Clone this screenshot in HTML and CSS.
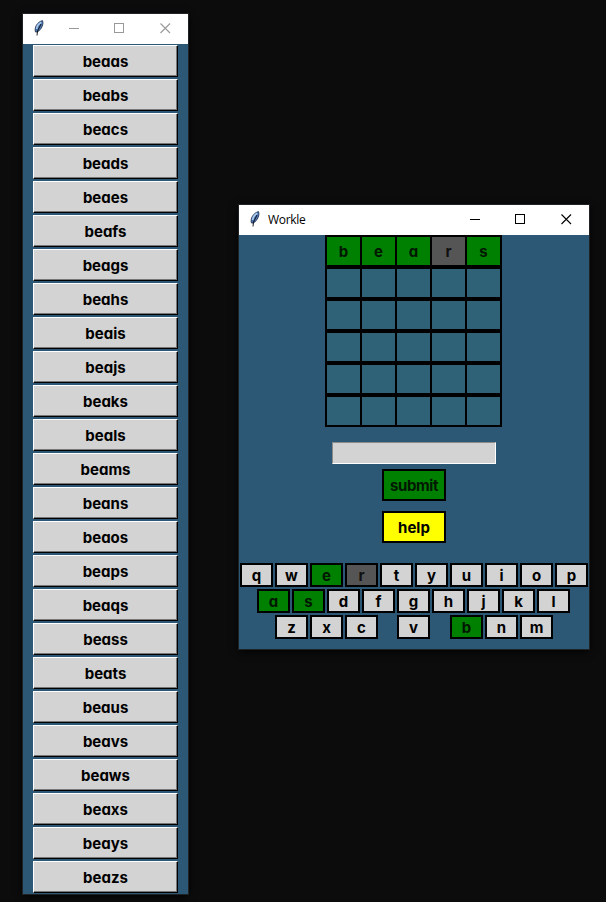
FILE: index.html
```html
<!DOCTYPE html>
<html lang="en">
<head>
<meta charset="utf-8">
<title>Workle</title>
<link rel="stylesheet" href="styles.css">
</head>
<body>
<svg class="defs" aria-hidden="true">
  <symbol id="feather" viewBox="0 0 12 16">
    <path d="M2.500 12C1 8 4 2 9.500 0.600C11 4 8.500 9.500 4.500 12Z" fill="#4a74b0" stroke="#1c2c48" stroke-width="0.800"/>
    <path d="M3.600 9C4 6 6 3.500 8.300 2.200" fill="none" stroke="#a9c9ee" stroke-width="1.600"/>
    <path d="M8 4L4.500 11L4 15.500" fill="none" stroke="#0a0a10" stroke-width="0.900"/>
  </symbol>
  <symbol id="controls" viewBox="0 0 102 12">
    <path d="M0 5.500H10M45.500 0.500H54.500V9.500H45.500Z" fill="none" stroke="currentColor" shape-rendering="crispEdges"/>
    <path d="M91.500 0.500L101 10M101 0.500L91.500 10" fill="none" stroke="currentColor" stroke-width="1.100"/>
  </symbol>
</svg>
<main class="desktop">
  <section class="window words">
    <header class="titlebar inactive">
      <svg class="feather"><use href="#feather"/></svg>
      <svg class="controls"><use href="#controls"/></svg>
    </header>
    <div class="word-list">
      <button>beaas</button><button>beabs</button><button>beacs</button><button>beads</button><button>beaes</button>
      <button>beafs</button><button>beags</button><button>beahs</button><button>beais</button><button>beajs</button>
      <button>beaks</button><button>beals</button><button>beams</button><button>beans</button><button>beaos</button>
      <button>beaps</button><button>beaqs</button><button>beass</button><button>beats</button><button>beaus</button>
      <button>beavs</button><button>beaws</button><button>beaxs</button><button>beays</button><button>beazs</button>
    </div>
  </section>
  <section class="window game">
    <header class="titlebar">
      <svg class="feather"><use href="#feather"/></svg>
      <span class="title">Workle</span>
      <svg class="controls"><use href="#controls"/></svg>
    </header>
    <div class="board">
      <div class="row"><i class="hit">b</i><i class="hit">e</i><i class="hit">a</i><i class="miss">r</i><i class="hit">s</i></div>
      <div class="row"><i></i><i></i><i></i><i></i><i></i></div>
      <div class="row"><i></i><i></i><i></i><i></i><i></i></div>
      <div class="row"><i></i><i></i><i></i><i></i><i></i></div>
      <div class="row"><i></i><i></i><i></i><i></i><i></i></div>
      <div class="row"><i></i><i></i><i></i><i></i><i></i></div>
    </div>
    <input class="guess" type="text" aria-label="guess">
    <button class="action submit">submit</button>
    <button class="action help">help</button>
    <div class="keyboard">
      <div class="keys top"><b>q</b><b>w</b><b class="hit">e</b><b class="miss">r</b><b>t</b><b>y</b><b>u</b><b>i</b><b>o</b><b>p</b></div>
      <div class="keys middle"><b class="hit">a</b><b class="hit">s</b><b>d</b><b>f</b><b>g</b><b>h</b><b>j</b><b>k</b><b>l</b></div>
      <div class="keys bottom"><b>z</b><b>x</b><b>c</b><b class="lone">v</b><b class="hit">b</b><b>n</b><b>m</b></div>
    </div>
  </section>
</main>
</body>
</html>
```
FILE: styles.css
```css
* { box-sizing: border-box; }
body {
  margin: 0;
  background: #0c0c0c;
  color: #000;
  font: 700 15px/20px "Century Gothic", "URW Gothic", Inter, sans-serif;
  font-feature-settings: "cv11";
}
.defs { position: absolute; width: 0; height: 0; }
.desktop {
  display: flex;
  align-items: flex-start;
  gap: 51px;
  height: 902px;
  padding: 14px 0 0 23px;
  overflow: hidden;
}
.window { background: #2d5875; box-shadow: 0 0 0 1px #202326, 0 2px 8px #000; }
.words { width: 165px; height: 880px; }
.game {
  display: flex;
  flex-direction: column;
  align-items: center;
  width: 350px;
  height: 444px;
  margin-top: 191px;
}
.titlebar {
  display: flex;
  align-items: flex-start;
  width: 100%;
  height: 30px;
  padding-left: 10px;
  background: #fff;
}
.feather { width: 12px; height: 16px; margin-top: 6px; }
.controls { width: 102px; height: 12px; margin: 9px 17px 0 auto; }
.inactive .controls { color: #999; }
.title { margin: 5px 0 0 7px; font: 12px/20px "Open Sans", sans-serif; letter-spacing: -0.3px; }
button, input { font: inherit; color: inherit; font-feature-settings: inherit; }
.word-list {
  display: flex;
  flex-direction: column;
  gap: 2px;
  padding: 1px 10px 0;
}
.word-list button {
  height: 32px;
  padding: 2px 0 0;
  background: #d3d3d3;
  border: 1px solid;
  border-color: #fff #000 #000 #fff;
  box-shadow: inset -1px -1px #777;
}
.board { width: 177px; margin-right: 1px; }
.row { display: flex; height: 32px; padding: 2px; gap: 2px; background: #000; }
.row i {
  width: 33px;
  height: 28px;
  padding-top: 5px;
  background: #2f6276;
  font-style: normal;
  text-align: center;
}
.row .hit, .keys .hit { background: #008000; color: #001800; }
.row .miss, .keys .miss { background: #555; color: #101010; }
.guess {
  width: 164px;
  height: 22px;
  margin: 15px 0 5px;
  background: #d3d3d3;
  border: 1px solid;
  border-color: #8a8a8a #fff #fff #8a8a8a;
}
.action {
  width: 64px;
  height: 32px;
  padding: 1px 0 0;
  border: 2px solid #000;
  text-align: center;
}
.submit { margin-bottom: 10px; background: #008000; color: #001800; letter-spacing: -0.4px; }
.help { background: #ff0; }
.keyboard {
  display: flex;
  flex-direction: column;
  gap: 2px;
  width: 348px;
  margin-top: 20px;
}
.keys { display: flex; gap: 2px; height: 24px; }
.keys b {
  width: 33px;
  height: 24px;
  padding-top: 1px;
  border: 2px solid #000;
  background: #d3d3d3;
  font-weight: 700;
  text-align: center;
}
.middle { padding-left: 17px; }
.bottom { padding-left: 35px; }
.keys .lone { margin: 0 18px 0 17px; }
```
